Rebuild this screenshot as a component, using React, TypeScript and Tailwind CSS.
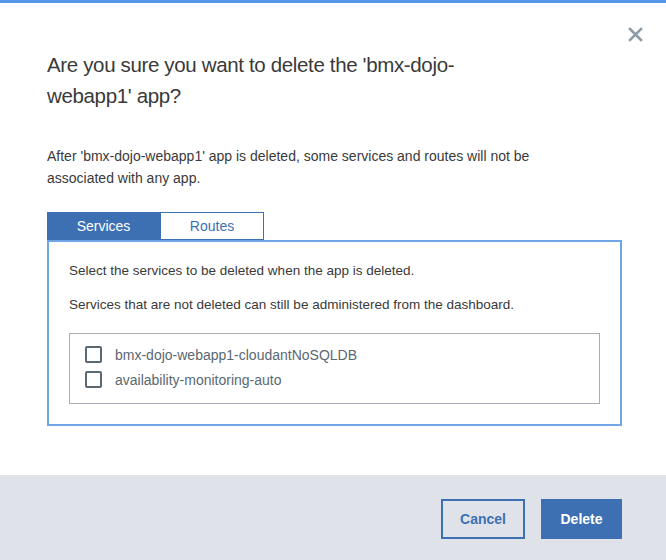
import { useState } from "react";

const services = [
  "bmx-dojo-webapp1-cloudantNoSQLDB",
  "availability-monitoring-auto",
];

function CloseIcon() {
  return (
    <svg width="15" height="15" viewBox="0 0 15 15" className="block">
      <path
        d="M2 2 L13 13 M13 2 L2 13"
        stroke="#8c9ba5"
        strokeWidth="2.6"
        strokeLinecap="square"
      />
    </svg>
  );
}

export default function App() {
  const [tab, setTab] = useState<"services" | "routes">("services");
  const [checked, setChecked] = useState<Record<string, boolean>>({});

  const toggle = (name: string) =>
    setChecked((prev) => ({ ...prev, [name]: !prev[name] }));

  return (
    <div className="relative w-[666px] h-[560px] flex flex-col bg-white font-['Liberation_Sans',Arial,sans-serif] text-[#3a3a3a]">
      <div className="flex-1 border-t-[3px] border-[#5596e6] pl-[47px] pr-[44px]">
        <button className="absolute top-[27px] right-[23px] p-0">
          <CloseIcon />
        </button>

        <h1 className="mt-[46px] text-[20.5px] leading-[31px] tracking-[-0.35px] font-normal text-[#3a3a3a]">
          Are you sure you want to delete the 'bmx-dojo-
          <br />
          webapp1' app?
        </h1>

        <p className="mt-[34px] text-[14px] leading-[22px]">
          After 'bmx-dojo-webapp1' app is deleted, some services and routes will not be
          <br />
          associated with any app.
        </p>

        <div className="mt-[23px] flex">
          <button
            onClick={() => setTab("services")}
            className={`w-[113px] h-[28px] text-[14px] border border-[#3d70b2] ${
              tab === "services" ? "bg-[#3d70b2] text-white" : "bg-white text-[#3d70b2]"
            }`}
          >
            Services
          </button>
          <button
            onClick={() => setTab("routes")}
            className={`w-[104px] h-[28px] text-[14px] border border-[#3d70b2] ${
              tab === "routes" ? "bg-[#3d70b2] text-white" : "bg-white text-[#3d70b2]"
            }`}
          >
            Routes
          </button>
        </div>

        <div className="h-[186px] border-2 border-[#6fa6e6] px-[20px] pt-[19px] text-[13.5px] leading-[20px]">
          <p>Select the services to be deleted when the app is deleted.</p>
          <p className="mt-[14px]">
            Services that are not deleted can still be administered from the dashboard.
          </p>

          <div className="mt-[18px] border border-[#a6adb4] pt-[8px] pb-[11px] pl-[15px]">
            {services.map((name) => (
              <label
                key={name}
                className="h-[25px] flex items-center gap-[13px] cursor-pointer text-[14px] text-[#5a6872]"
              >
                <span
                  onClick={() => toggle(name)}
                  className={`w-[17px] h-[17px] rounded-[2px] border-2 border-[#5a6872] flex items-center justify-center ${
                    checked[name] ? "bg-[#5a6872]" : "bg-white"
                  }`}
                >
                  {checked[name] && (
                    <svg width="11" height="9" viewBox="0 0 11 9">
                      <path d="M1 4.5 L4 7.5 L10 1" stroke="white" strokeWidth="2" fill="none" />
                    </svg>
                  )}
                </span>
                <span>{name}</span>
              </label>
            ))}
          </div>
        </div>
      </div>

      <div className="h-[85px] bg-[#dfe3e9] flex justify-end gap-[16px] pt-[24px] pr-[44px]">
        <button className="w-[84px] h-[40px] border-2 border-[#3d70b2] text-[#3d70b2] text-[14px] font-bold">
          Cancel
        </button>
        <button className="w-[81px] h-[40px] bg-[#3d70b2] text-white text-[14px] font-bold">
          Delete
        </button>
      </div>
    </div>
  );
}
